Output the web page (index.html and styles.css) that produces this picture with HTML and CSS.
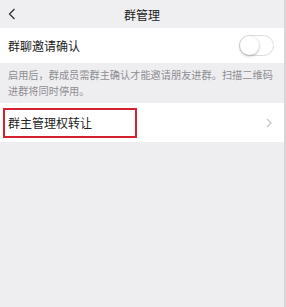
FILE: index.html
```html
<!DOCTYPE html>
<html>
<head>
	<meta charset="utf-8">
	<title>群管理</title>
	<link rel="stylesheet" href="styles.css">
</head>
<body>

	<div class="pantalla">
		<div class="barraTitulo">
			<span class="atras">
				<svg width="8" height="12" viewBox="0 0 8 12"><path d="M6.5 1 L1.5 6 L6.5 11" fill="none" stroke="#333" stroke-width="1.3"/></svg>
			</span>
			<span class="titulo">群管理</span>
			<span></span>
		</div>

		<div class="fila">
			<span class="texto">群聊邀请确认</span>
			<span class="interruptor"><span class="bola"></span></span>
		</div>
		<div class="nota">启用后，群成员需群主确认才能邀请朋友进群。扫描二维码<br>进群将同时停用。</div>

		<div class="fila filaEnlace">
			<span class="marcado"><span class="texto">群主管理权转让</span></span>
			<svg class="flecha" width="6" height="10" viewBox="0 0 6 10"><path d="M1 1 L5 5 L1 9" fill="none" stroke="#c4c4c8" stroke-width="1.2"/></svg>
		</div>
	</div>

</body>
</html>
```

FILE: styles.css
```css
*{box-sizing: border-box;}
body{
	margin: 0;
	background: #eeedf0;
	font-family: "Noto Sans CJK SC", "Noto Sans", sans-serif;
}
div.pantalla{
	width: 286px;
	height: 307px;
	border-right: 2px solid #d6d5d8;
}
div.barraTitulo{
	height: 28px;
	display: grid;
	grid-template-columns: 1fr auto 1fr;
	align-items: center;
	background: #efeef1;
}
span.atras{padding-left: 8px; display: flex;}
span.titulo{font-size: 12px; color: #222;}

div.fila{
	background: #fff;
	height: 35px;
	display: flex;
	align-items: center;
	justify-content: space-between;
	padding: 0 10px 0 8px;
}
span.texto{font-size: 12px; color: #222;}

span.interruptor{
	width: 35px;
	height: 21px;
	border-radius: 11px;
	border: 1px solid #dcdcdf;
	background: #fff;
	position: relative;
}
span.bola{
	position: absolute;
	left: 0;
	top: 0;
	width: 19px;
	height: 19px;
	border-radius: 50%;
	background: #fff;
	box-shadow: 0 1px 3px rgba(0,0,0,.3);
}

div.nota{
	padding: 4px 0 4px 8px;
	font-size: 10.2px;
	line-height: 16px;
	color: #8e8e93;
	white-space: nowrap;
}

div.filaEnlace{
	height: 39px;
	padding-left: 3px;
	padding-right: 12px;
}
span.marcado{
	width: 134px;
	height: 30px;
	border: 2px solid #d42231;
	display: flex;
	align-items: center;
	padding-left: 3px;
}
```
